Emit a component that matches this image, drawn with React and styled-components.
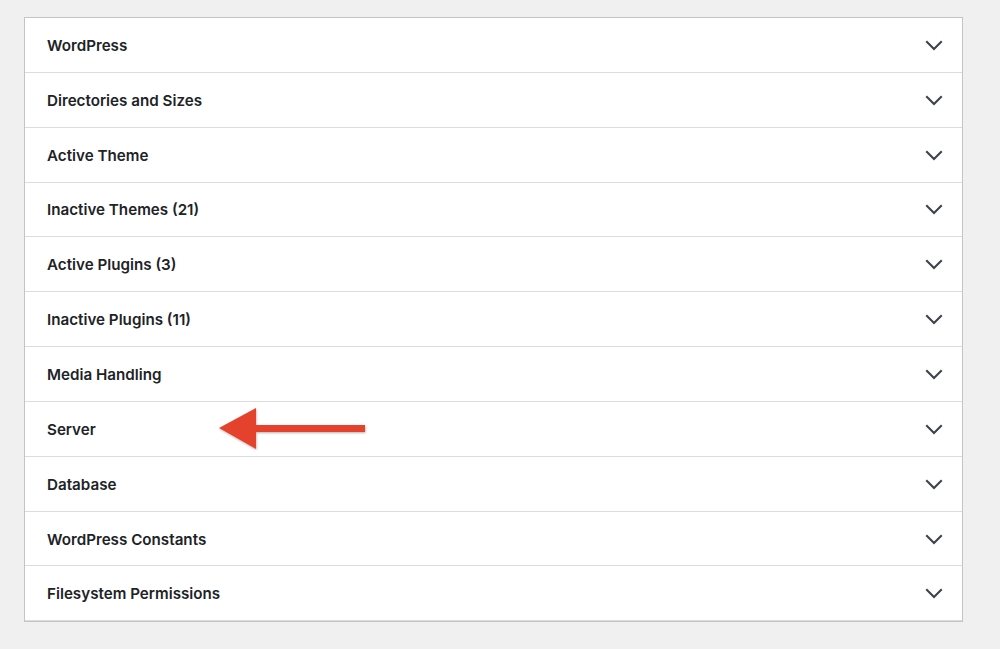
import React from 'react'
import styled, { createGlobalStyle } from 'styled-components'

const Global = createGlobalStyle`
  html, body {
    margin: 0;
    background: #f0f0f1;
    font-family: Inter, "Noto Sans", "Liberation Sans", sans-serif;
  }
`

const sections = [
  'WordPress',
  'Directories and Sizes',
  'Active Theme',
  'Inactive Themes (21)',
  'Active Plugins (3)',
  'Inactive Plugins (11)',
  'Media Handling',
  'Server',
  'Database',
  'WordPress Constants',
  'Filesystem Permissions',
]

const Chevron = () => (
  <svg width="18" height="11" viewBox="0 0 18 11" fill="none">
    <path d="M2 2 L9 9 L16 2" stroke="#3c434a" strokeWidth="2.1" strokeLinecap="square" />
  </svg>
)

const RedArrow = () => (
  <svg width="160" height="50" viewBox="0 0 160 50">
    <defs>
      <filter id="sh" x="-10%" y="-30%" width="120%" height="160%">
        <feDropShadow dx="0.5" dy="1" stdDeviation="1" floodColor="#000" floodOpacity="0.3" />
      </filter>
    </defs>
    <g filter="url(#sh)">
      <rect x="35" y="20" width="113" height="7" fill="#e5432d" />
      <polygon points="2,23 39,3 39,44" fill="#e5432d" />
    </g>
  </svg>
)

export default function App() {
  return (
    <>
      <Global />
      <Page>
        <Panel>
          {sections.map((s) => (
            <Row key={s}>
              <Title>{s}</Title>
              <Chevron />
            </Row>
          ))}
          <ArrowWrap>
            <RedArrow />
          </ArrowWrap>
        </Panel>
      </Page>
    </>
  )
}

const Page = styled.div`
  padding: 17px 0 0 24px;
  height: 649px;
  box-sizing: border-box;
`
const Panel = styled.div`
  position: relative;
  width: 939px;
  box-sizing: border-box;
  background: #fff;
  border: 1px solid #c3c4c7;
`
const Row = styled.div`
  display: flex;
  align-items: center;
  justify-content: space-between;
  height: 54.85px;
  box-sizing: border-box;
  padding: 1px 19px 0 22px;
  border-bottom: 1px solid #dcdcde;
  &:last-of-type {
    border-bottom: none;
  }
`
const Title = styled.span`
  font-size: 15.2px;
  font-weight: 600;
  color: #1d2327;
`
const ArrowWrap = styled.div`
  position: absolute;
  left: 192px;
  top: 387px;
  line-height: 0;
`
